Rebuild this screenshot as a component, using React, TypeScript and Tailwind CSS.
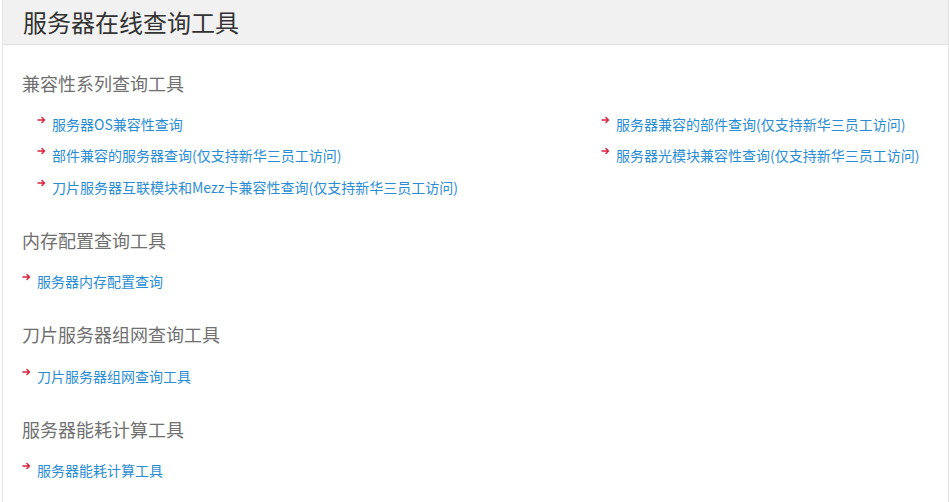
import React from "react";

const Arrow = () => (
  <svg width="9" height="8" viewBox="0 0 9 8" className="shrink-0 mt-[-8px]">
    <path d="M0.5 4H7.5M4.5 1L7.5 4L4.5 7" stroke="#d9203a" strokeWidth="1.3" fill="none" />
  </svg>
);

const LinkItem = ({ text }: { text: string }) => (
  <div className="flex items-center gap-[6px] h-[31.5px]">
    <Arrow />
    <a className="text-[14px] text-[#2a8dd4] leading-none cursor-pointer">{text}</a>
  </div>
);

const SectionTitle = ({ text }: { text: string }) => (
  <h2 className="text-[18px] text-[#707070] leading-[18px]">{text}</h2>
);

export default function App() {
  return (
    <div
      className="ml-[2px] w-[947px] h-[502px] border-l border-r border-[#e3e3e3] bg-white overflow-hidden"
      style={{ fontFamily: '"Microsoft YaHei", "Noto Sans CJK SC", "Noto Sans", sans-serif' }}
    >
      <div className="h-[45px] bg-[#f1f1f1] border-b border-[#e0e0e0] flex items-center pl-[20px]">
        <h1 className="text-[24px] text-[#333] leading-none">服务器在线查询工具</h1>
      </div>
      <div className="pl-[19px]">
        <div className="pt-[29px]">
          <SectionTitle text="兼容性系列查询工具" />
          <div className="pl-[15px] pt-[16px] grid grid-cols-[564px_1fr]">
            <div>
              <LinkItem text="服务器OS兼容性查询" />
              <LinkItem text="部件兼容的服务器查询(仅支持新华三员工访问)" />
              <LinkItem text="刀片服务器互联模块和Mezz卡兼容性查询(仅支持新华三员工访问)" />
            </div>
            <div>
              <LinkItem text="服务器兼容的部件查询(仅支持新华三员工访问)" />
              <LinkItem text="服务器光模块兼容性查询(仅支持新华三员工访问)" />
            </div>
          </div>
        </div>
        <div className="pt-[28px]">
          <SectionTitle text="内存配置查询工具" />
          <div className="pt-[17px]">
            <LinkItem text="服务器内存配置查询" />
          </div>
        </div>
        <div className="pt-[28px]">
          <SectionTitle text="刀片服务器组网查询工具" />
          <div className="pt-[17px]">
            <LinkItem text="刀片服务器组网查询工具" />
          </div>
        </div>
        <div className="pt-[28px]">
          <SectionTitle text="服务器能耗计算工具" />
          <div className="pt-[17px]">
            <LinkItem text="服务器能耗计算工具" />
          </div>
        </div>
      </div>
    </div>
  );
}
